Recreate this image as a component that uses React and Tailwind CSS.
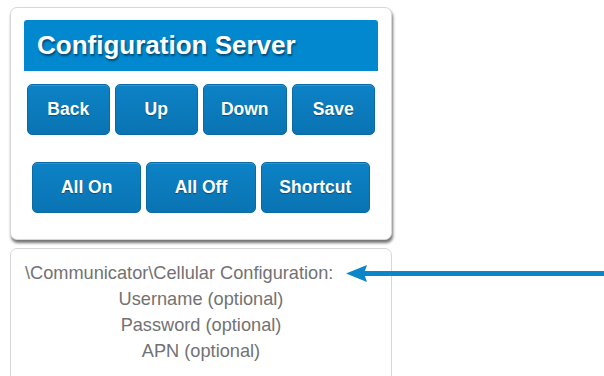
import React from "react";

const Btn = ({ children, w }) => (
  <div
    className={`${w} h-[51px] flex items-center justify-center rounded-[5px] border border-[#0a6aa3] bg-gradient-to-b from-[#0c82c6] to-[#0a74b3] text-white font-bold text-[17.5px] [text-shadow:0_1px_1px_rgba(0,0,0,0.35)] shadow-[inset_0_1px_0_rgba(255,255,255,0.15)]`}
  >
    {children}
  </div>
);

export default function App() {
  return (
    <div
      className="relative w-[604px] h-[376px] overflow-hidden bg-white"
      style={{ fontFamily: '"Liberation Sans", Arial, sans-serif' }}
    >
      <div className="pl-[10px] pt-[7px] w-[392px]">
        <div className="h-[233px] rounded-[7px] border border-[#d8d8d8] bg-white shadow-[1px_3px_3px_rgba(0,0,0,0.55)] pt-[12px] px-[13px]">
          <div className="h-[51px] bg-[#0288cf] rounded-t-[3px] flex items-center pl-[13px] text-white font-bold text-[26px] [text-shadow:1px_2px_2px_rgba(0,0,0,0.45)]">
            Configuration Server
          </div>
          <div className="mt-[13px] px-[3px] flex gap-[5px]">
            <Btn w="w-[83px]">Back</Btn>
            <Btn w="w-[84px]">Up</Btn>
            <Btn w="w-[84px]">Down</Btn>
            <Btn w="w-[84px]">Save</Btn>
          </div>
          <div className="mt-[27px] px-[8px] flex gap-[5px]">
            <Btn w="w-[110px]">All On</Btn>
            <Btn w="w-[110px]">All Off</Btn>
            <Btn w="w-[110px]">Shortcut</Btn>
          </div>
        </div>
        <div className="mt-[8px] h-[160px] rounded-t-[7px] border border-[#d8d8d8] bg-white pt-[11px] text-[18.2px] leading-[26px] text-[#727272]">
          <div className="pl-[14px]">\Communicator\Cellular Configuration:</div>
          <div className="text-center">Username (optional)</div>
          <div className="text-center">Password (optional)</div>
          <div className="text-center">APN (optional)</div>
        </div>
      </div>
      <svg
        className="absolute left-[340px] top-[260px]"
        width="264"
        height="28"
        viewBox="0 0 264 28"
      >
        <rect x="22" y="11" width="242" height="5" fill="#0a86c9" />
        <polygon points="6,13.5 27,5 24,13.5 27,22" fill="#0a86c9" />
      </svg>
    </div>
  );
}
